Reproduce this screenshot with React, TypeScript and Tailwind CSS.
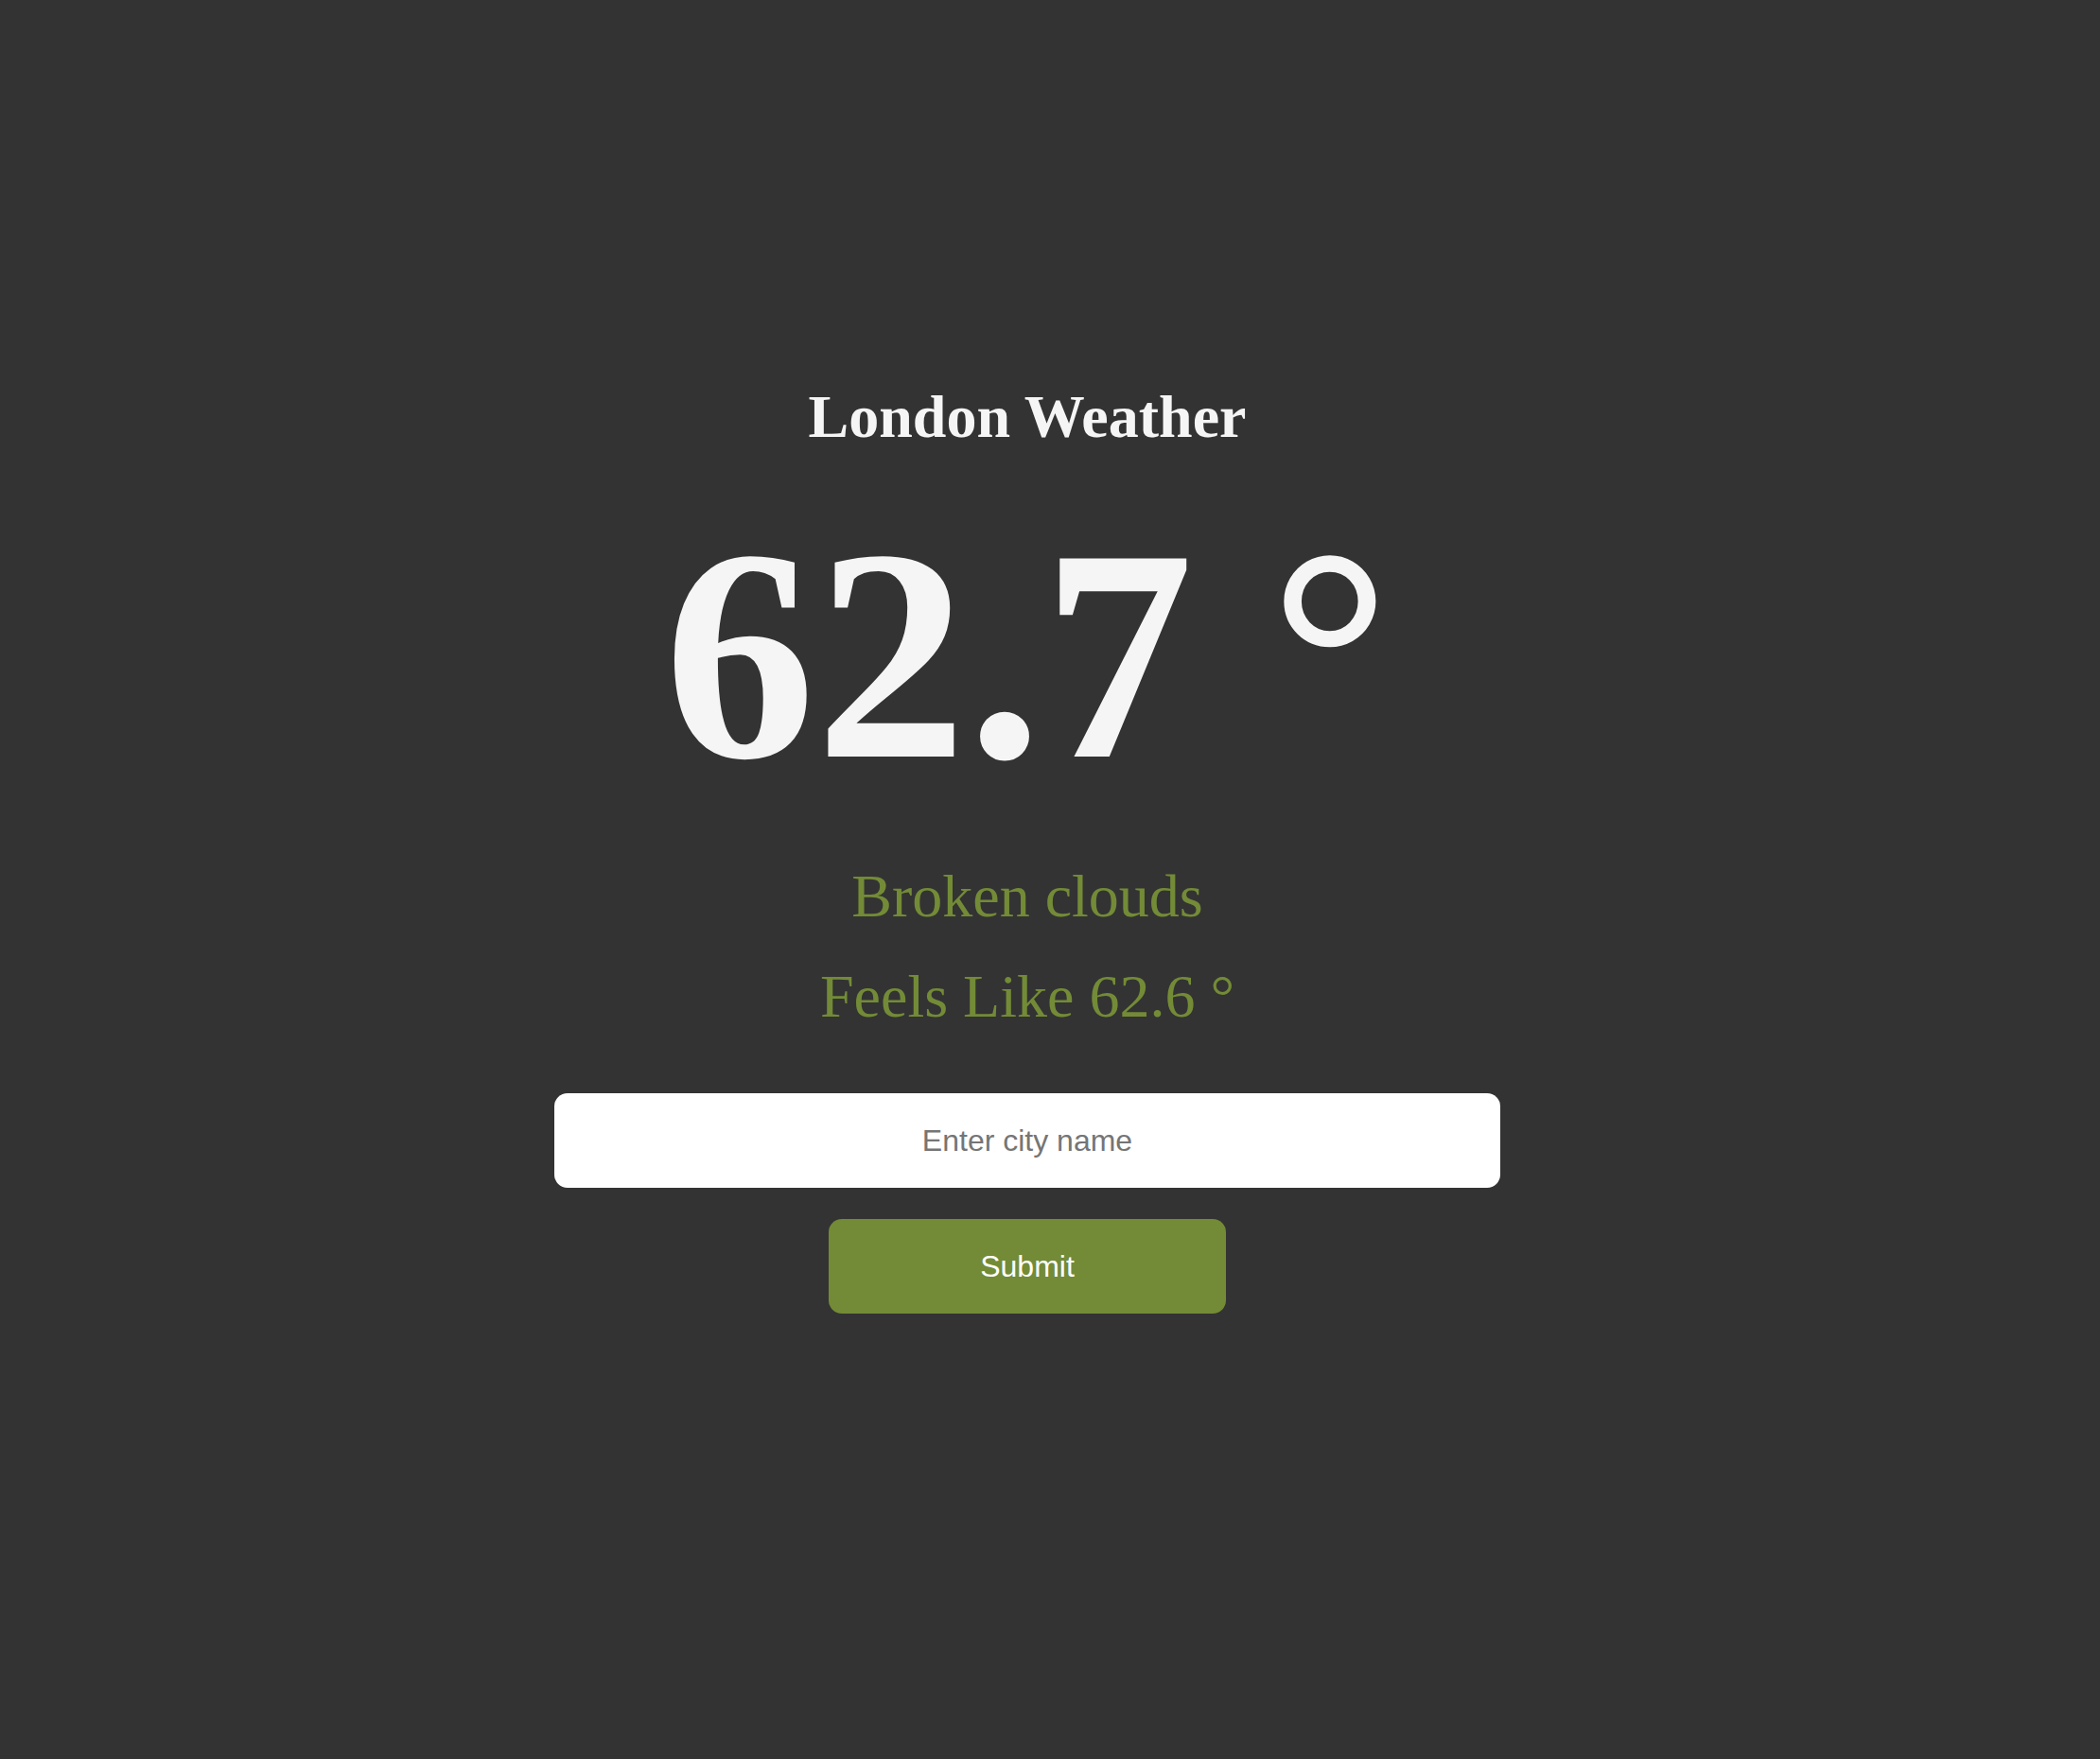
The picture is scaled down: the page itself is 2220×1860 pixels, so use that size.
import { FC } from "react";

const App: FC = () => {
  return (
    <div className="min-h-[1860px] w-full bg-[#333333] pr-[48px] font-['Liberation_Serif','Times_New_Roman',serif]">
      <div className="flex flex-col items-center pt-[409px]">
        <h1 className="text-[64px] font-bold leading-none text-[#f5f5f5]">London Weather</h1>
        <div className="mt-[59px] whitespace-pre text-[320px] font-bold leading-none text-[#f5f5f5]">
          62.7 °
        </div>
        <p className="mt-[64px] text-[64px] leading-none text-[#738b37]">Broken clouds</p>
        <p className="mt-[42px] text-[64px] leading-none text-[#738b37]">Feels Like 62.6 °</p>
        <form className="mt-[70px] flex flex-col items-center gap-[33px]">
          <input
            type="text"
            placeholder="Enter city name"
            className="h-[100px] w-[1000px] rounded-[14px] border-0 bg-white text-center font-['Liberation_Sans',Arial,sans-serif] text-[32px] text-[#333] placeholder:text-[#757575] focus:outline-none"
          />
          <button
            type="submit"
            className="h-[100px] w-[420px] rounded-[14px] bg-[#738b37] font-['Liberation_Sans',Arial,sans-serif] text-[32px] text-white"
          >
            Submit
          </button>
        </form>
      </div>
    </div>
  );
};

export default App;
